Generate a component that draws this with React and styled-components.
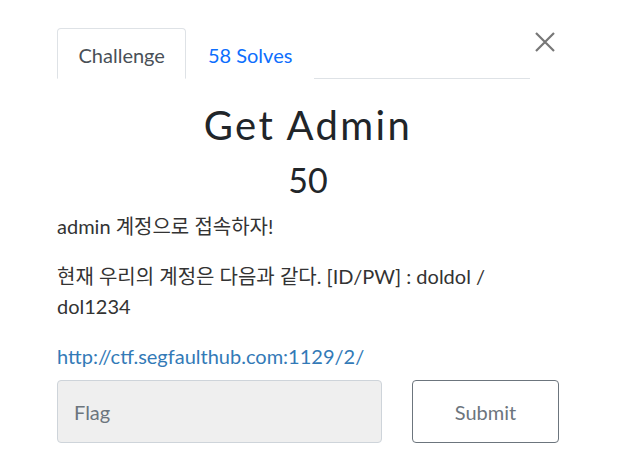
import styled, { createGlobalStyle } from "styled-components";

const GlobalStyle = createGlobalStyle`
    body {
        margin: 0;
        background: #ffffff;
        font-family: Lato, "Noto Sans CJK KR", sans-serif;
        color: #212529;
    }
    * { box-sizing: border-box; }
`

export default function App(){
    return(
    <Modal>
        <GlobalStyle/>
        <HeaderRow>
            <Tabs>
                <Tab active>Challenge</Tab>
                <Tab>58 Solves</Tab>
            </Tabs>
            <CloseButton aria-label="Close">
                <svg width="22" height="22" viewBox="0 0 22 22">
                    <path d="M2 2 L20 20 M20 2 L2 20" stroke="#777" strokeWidth="2.2" fill="none"/>
                </svg>
            </CloseButton>
        </HeaderRow>

        <Title>Get Admin</Title>
        <Points>50</Points>

        <Description>
            <p>admin 계정으로 접속하자!</p>
            <p>현재 우리의 계정은 다음과 같다. [ID/PW] : doldol / dol1234</p>
            <p><Link href="#">http://ctf.segfaulthub.com:1129/2/</Link></p>
        </Description>

        <SubmitRow>
            <FlagInput placeholder="Flag"/>
            <SubmitButton>Submit</SubmitButton>
        </SubmitRow>
    </Modal>)
}

const Modal = styled.div`
    width: 617px;
    padding: 28px 58px 0 57px;
`

const HeaderRow = styled.div`
    display: flex;
    align-items: flex-start;
`

const Tabs = styled.div`
    flex: 1;
    display: flex;
    border-bottom: 1px solid #dee2e6;
`

const Tab = styled.div`
    padding: 0 20.5px;
    height: 51px;
    line-height: 52px;
    font-size: 20px;
    margin-bottom: -1px;
    border: 1px solid ${props => props.active ? "#dee2e6" : "transparent"};
    border-bottom-color: ${props => props.active ? "#ffffff" : "transparent"};
    border-radius: 4px 4px 0 0;
    background: #ffffff;
    color: ${props => props.active ? "#495057" : "#0d6efd"};
`

const CloseButton = styled.button`
    width: 29px;
    height: 29px;
    margin-top: -1px;
    padding: 0;
    border: 0;
    background: transparent;
    display: flex;
    align-items: center;
    justify-content: center;
`

const Title = styled.h2`
    margin: 21px 0 0;
    text-align: center;
    font-size: 40px;
    font-weight: 400;
    letter-spacing: 2.4px;
    line-height: 50px;
    color: #212529;
`

const Points = styled.h4`
    margin: 10px 0 0;
    text-align: center;
    font-size: 34px;
    font-weight: 400;
    line-height: 40px;
    color: #212529;
`

const Description = styled.div`
    margin-top: 11px;
    font-size: 20px;
    line-height: 30px;
    color: #333333;

    p {
        margin: 0 0 20px;
    }
`

const Link = styled.a`
    color: #337ab7;
    text-decoration: none;
`

const SubmitRow = styled.div`
    display: flex;
    gap: 30px;
    margin-top: -11px;
`

const FlagInput = styled.input`
    width: 325px;
    height: 63px;
    padding: 0 16px;
    border: 1px solid #ced4da;
    border-radius: 4px;
    background: #efefef;
    font-family: Lato, sans-serif;
    font-size: 20px;
    color: #495057;

    &::placeholder {
        color: #6c757d;
    }
`

const SubmitButton = styled.button`
    width: 147px;
    height: 63px;
    border: 1px solid #6c757d;
    border-radius: 4px;
    background: #ffffff;
    font-family: Lato, sans-serif;
    font-size: 20px;
    color: #6c757d;
`
